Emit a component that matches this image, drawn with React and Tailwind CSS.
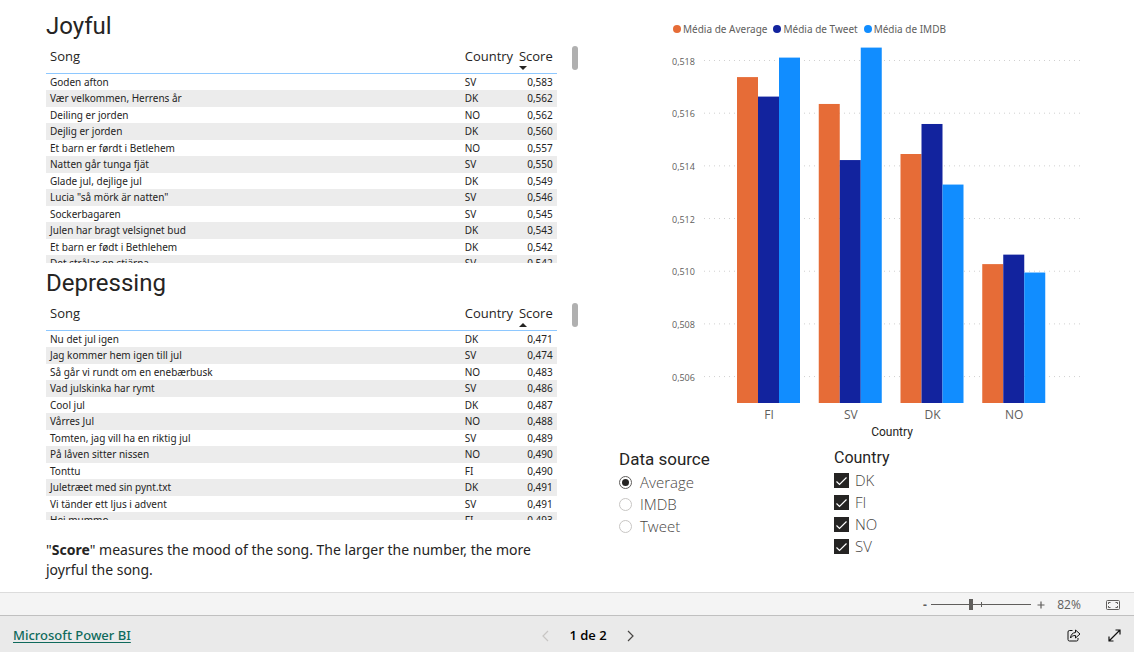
import { useState } from "react";

const JOYFUL = [
  ["Goden afton", "SV", "0,583"],
  ["Vær velkommen, Herrens år", "DK", "0,562"],
  ["Deiling er jorden", "NO", "0,562"],
  ["Dejlig er jorden", "DK", "0,560"],
  ["Et barn er førdt i Betlehem", "NO", "0,557"],
  ["Natten går tunga fjät", "SV", "0,550"],
  ["Glade jul, dejlige jul", "DK", "0,549"],
  ['Lucia "så mörk är natten"', "SV", "0,546"],
  ["Sockerbagaren", "SV", "0,545"],
  ["Julen har bragt velsignet bud", "DK", "0,543"],
  ["Et barn er født i Bethlehem", "DK", "0,542"],
  ["Det strålar en stjärna", "SV", "0,542"],
];

const DEPRESSING = [
  ["Nu det jul igen", "DK", "0,471"],
  ["Jag kommer hem igen till jul", "SV", "0,474"],
  ["Så går vi rundt om en enebærbusk", "NO", "0,483"],
  ["Vad julskinka har rymt", "SV", "0,486"],
  ["Cool jul", "DK", "0,487"],
  ["Vårres Jul", "NO", "0,488"],
  ["Tomten, jag vill ha en riktig jul", "SV", "0,489"],
  ["På låven sitter nissen", "NO", "0,490"],
  ["Tonttu", "FI", "0,490"],
  ["Juletræet med sin pynt.txt", "DK", "0,491"],
  ["Vi tänder ett ljus i advent", "SV", "0,491"],
  ["Hei mummo", "FI", "0,493"],
];

const SERIES = [
  { name: "Média de Average", fill: "fill-[#e66c37]", dot: "bg-[#e66c37]" },
  { name: "Média de Tweet", fill: "fill-[#12239e]", dot: "bg-[#12239e]" },
  { name: "Média de IMDB", fill: "fill-[#118dff]", dot: "bg-[#118dff]" },
];

const MEANS = [
  { country: "FI", values: [0.51737, 0.51663, 0.51811] },
  { country: "SV", values: [0.51635, 0.51422, 0.51849] },
  { country: "DK", values: [0.51445, 0.51559, 0.51329] },
  { country: "NO", values: [0.51027, 0.51063, 0.50995] },
];

const TICKS = [0.518, 0.516, 0.514, 0.512, 0.51, 0.508, 0.506];
const BASELINE = 363;
const BAR_WIDTH = 21;

const yOf = (value) => 20.5 + (0.518 - value) * 26340;

function SongTable({ title, rows, ascending }) {
  return (
    <section>
      <h2 className="h-[34px] font-['Roboto',sans-serif] text-2xl leading-8 text-[#252423]">
        {title}
      </h2>
      <div className="flex h-[219px] items-start justify-between overflow-hidden">
        <table className="w-[96%] table-fixed border-collapse text-[#252423]">
          <colgroup>
            <col />
            <col className="w-14" />
            <col className="w-10" />
          </colgroup>
          <thead>
            <tr className="h-[29px] border-b border-[#8ec8ff] text-[13px] leading-4">
              <th className="px-1 pb-1 text-left font-normal">Song</th>
              <th className="px-1 pb-1 text-left font-normal">Country</th>
              <th className="relative pr-1 pb-1 text-right font-normal" aria-sort={ascending ? "ascending" : "descending"}>
                Score
                <svg viewBox="0 0 8 4" className="absolute bottom-[3px] left-0.5 h-1 w-2" aria-hidden="true">
                  <path d={ascending ? "M0 4 4 0l4 4z" : "M0 0h8L4 4z"} fill="#252423" />
                </svg>
              </th>
            </tr>
          </thead>
          <tbody className="font-['Noto_Sans',sans-serif] text-[10px] leading-4">
            {rows.map(([song, country, score]) => (
              <tr key={song} className="h-4 even:h-[17px] even:bg-[#ececec]">
                <td className="truncate px-1 py-0">{song}</td>
                <td className="px-1 py-0">{country}</td>
                <td className="py-0 pr-1 text-right">{score}</td>
              </tr>
            ))}
          </tbody>
        </table>
        <div className="mt-0.5 h-6 w-1.5 rounded-full bg-[#b0b0b0]" />
      </div>
    </section>
  );
}

function MeanChart() {
  return (
    <figure className="pr-[46px] pl-[88px]">
      <figcaption className="flex h-[18px] items-center gap-1.5 pl-[5px] font-['Noto_Sans',sans-serif] text-[10px] text-[#605e5c]">
        {SERIES.map(({ name, dot }) => (
          <span key={name} className="flex items-center gap-0.5 whitespace-nowrap">
            <i className={`size-2 rounded-full ${dot}`} />
            {name}
          </span>
        ))}
      </figcaption>
      <svg viewBox="0 0 420 402" className="mt-0.5 block w-full" role="img" aria-label="Means by country">
        {TICKS.map((tick) => (
          <g key={tick}>
            <line x1="36" x2="414" y1={yOf(tick)} y2={yOf(tick)} stroke="#d0d0d0" strokeDasharray="1 4" />
            <text x="4" y={yOf(tick) + 4} className="fill-[#605e5c] text-[9px]">
              {tick.toFixed(3).replace(".", ",")}
            </text>
          </g>
        ))}
        {MEANS.map(({ country, values }, i) => {
          const left = 69 + i * 81.75;
          return (
            <g key={country}>
              {values.map((value, j) => (
                <rect
                  key={SERIES[j].name}
                  x={left + j * BAR_WIDTH}
                  y={yOf(value)}
                  width={BAR_WIDTH}
                  height={BASELINE - yOf(value)}
                  className={SERIES[j].fill}
                />
              ))}
              <text x={left + 32} y="379" textAnchor="middle" className="fill-[#605e5c] text-[12px]">
                {country}
              </text>
            </g>
          );
        })}
        <text x="224" y="396" textAnchor="middle" className="fill-[#252423] font-['Roboto',sans-serif] text-[12px]">
          Country
        </text>
      </svg>
    </figure>
  );
}

function Slicers() {
  const [source, setSource] = useState("Average");
  const [countries, setCountries] = useState(["DK", "FI", "NO", "SV"]);

  const toggle = (name) =>
    setCountries((prev) => (prev.includes(name) ? prev.filter((c) => c !== name) : [...prev, name]));

  return (
    <div className="flex pt-[5px] pl-[39px] text-[15px] font-light text-[#484644]">
      <fieldset className="w-[215px]">
        <legend className="font-['Roboto',sans-serif] text-[17px] leading-6 font-normal text-[#252423]">Data source</legend>
        {["Average", "IMDB", "Tweet"].map((name) => (
          <label key={name} className="flex h-[22px] items-center gap-2">
            <input
              type="radio"
              name="source"
              checked={source === name}
              onChange={() => setSource(name)}
              className="size-[13px] appearance-none rounded-full border border-[#c8c6c4] bg-white bg-clip-content p-0.5 checked:border-[#605e5c] checked:bg-[#252423]"
            />
            {name}
          </label>
        ))}
      </fieldset>
      <fieldset>
        <legend className="font-['Roboto',sans-serif] text-base leading-[22px] font-normal text-[#252423]">Country</legend>
        {["DK", "FI", "NO", "SV"].map((name) => (
          <label key={name} className="flex h-[22px] items-center gap-1.5">
            <span className="relative flex">
              <input
                type="checkbox"
                checked={countries.includes(name)}
                onChange={() => toggle(name)}
                className="peer size-[15px] appearance-none border border-[#252423] checked:bg-[#252423]"
              />
              <svg viewBox="0 0 15 15" className="pointer-events-none absolute inset-0 hidden peer-checked:block" aria-hidden="true">
                <path d="M2.500 8.500l3 3 7-7" fill="none" stroke="#fff" strokeWidth="1.200" />
              </svg>
            </span>
            {name}
          </label>
        ))}
      </fieldset>
    </div>
  );
}

function ZoomBar() {
  const [zoom, setZoom] = useState(82);
  return (
    <div className="flex h-[23px] items-center justify-end border-t border-[#dcdcdc] bg-[#f4f4f4] pt-px pr-3.5 text-xs text-[#605e5c]">
      <button type="button" aria-label="Zoom out" className="w-3 text-center font-bold" onClick={() => setZoom(zoom - 10)}>
        -
      </button>
      <div className="relative flex h-3 w-[100px] items-center">
        <input
          type="range"
          aria-label="Zoom"
          min="14"
          max="186"
          value={zoom}
          onChange={(e) => setZoom(Number(e.target.value))}
          className="h-px w-full appearance-none bg-[#605e5c] [&::-webkit-slider-thumb]:h-[11px] [&::-webkit-slider-thumb]:w-1 [&::-webkit-slider-thumb]:appearance-none [&::-webkit-slider-thumb]:bg-[#605e5c]"
        />
        <span className="pointer-events-none absolute left-1/2 h-[5px] w-px bg-[#605e5c]" />
      </div>
      <button type="button" aria-label="Zoom in" className="ml-1.5 flex" onClick={() => setZoom(zoom + 10)}>
        <svg viewBox="0 0 8 8" className="size-2">
          <path d="M4 .5v7M.5 4h7" stroke="#605e5c" strokeWidth="1.200" />
        </svg>
      </button>
      <span className="w-12 text-center">{zoom}%</span>
      <button type="button" aria-label="Fit to page" className="ml-[13px] flex">
        <svg viewBox="0 0 14 10" className="h-2.5 w-3.5" fill="none" stroke="#605e5c">
          <rect x=".5" y=".5" width="13" height="9" rx="1" />
          <path d="M4.500 2.500h-2v1.500M2.500 6v1.500h2M9.500 2.500h2v1.500M11.500 6v1.500h-2" />
        </svg>
      </button>
    </div>
  );
}

function Footer() {
  return (
    <footer className="grid h-[37px] grid-cols-[1fr_auto_1fr] items-center border-t border-[#c0c0c0] bg-[#eaeaea] px-[13px] pt-[3px]">
      <a href="#powerbi" className="justify-self-start font-['Noto_Sans',sans-serif] text-[13px] font-medium text-[#0f6a5c] underline underline-offset-2">
        Microsoft Power BI
      </a>
      <nav className="mr-[-42px] flex items-center gap-5">
        <button type="button" aria-label="Previous page" disabled className="flex">
          <svg viewBox="0 0 7 12" className="h-3 w-[7px]" fill="none" stroke="#c8c6c4" strokeWidth="1.200">
            <path d="M6 1 1 6l5 5" />
          </svg>
        </button>
        <span className="text-[13px] font-semibold text-black">1 de 2</span>
        <button type="button" aria-label="Next page" className="flex">
          <svg viewBox="0 0 7 12" className="h-3 w-[7px]" fill="none" stroke="#484644" strokeWidth="1.200">
            <path d="m1 1 5 5-5 5" />
          </svg>
        </button>
      </nav>
      <div className="flex items-center gap-[27px] justify-self-end">
        <button type="button" aria-label="Share" className="flex">
          <svg viewBox="0 0 14 13" className="h-[13px] w-3.5" fill="none" stroke="#111" strokeLinejoin="round">
            <path d="M5.500 1.500h-3a1.500 1.500 0 0 0-1.500 1.500v7.500A1.500 1.500 0 0 0 2.500 12h7a1.500 1.500 0 0 0 1.500-1.500V9" />
            <path d="M8.500 1 13 5 8.500 9V6.500C6 6.500 4.700 7.200 3.500 9c.2-3.200 2-5.200 5-5.500z" />
          </svg>
        </button>
        <button type="button" aria-label="Full screen" className="flex">
          <svg viewBox="0 0 13 13" className="size-[13px]" fill="none" stroke="#111" strokeWidth="1.200">
            <path d="M7.500 1H12v4.500M12 1 1 12M1 7.500V12h4.500" />
          </svg>
        </button>
      </div>
    </footer>
  );
}

export default function App() {
  return (
    <div className="flex min-h-screen flex-col bg-white font-['Open_Sans','Noto_Sans',sans-serif]">
      <main className="grid flex-1 grid-cols-[578fr_556fr] items-start">
        <div className="flex flex-col gap-1 pt-2.5 pl-[46px]">
          <SongTable title="Joyful" rows={JOYFUL} />
          <SongTable title="Depressing" rows={DEPRESSING} ascending />
          <p className="pt-4 pr-6 font-['Noto_Sans',sans-serif] text-sm leading-5 text-[#252423]">
            "<strong>Score</strong>" measures the mood of the song. The larger the number, the more joyrful the song.
          </p>
        </div>
        <div className="pt-5 pl-0.5">
          <MeanChart />
          <Slicers />
        </div>
      </main>
      <ZoomBar />
      <Footer />
    </div>
  );
}
